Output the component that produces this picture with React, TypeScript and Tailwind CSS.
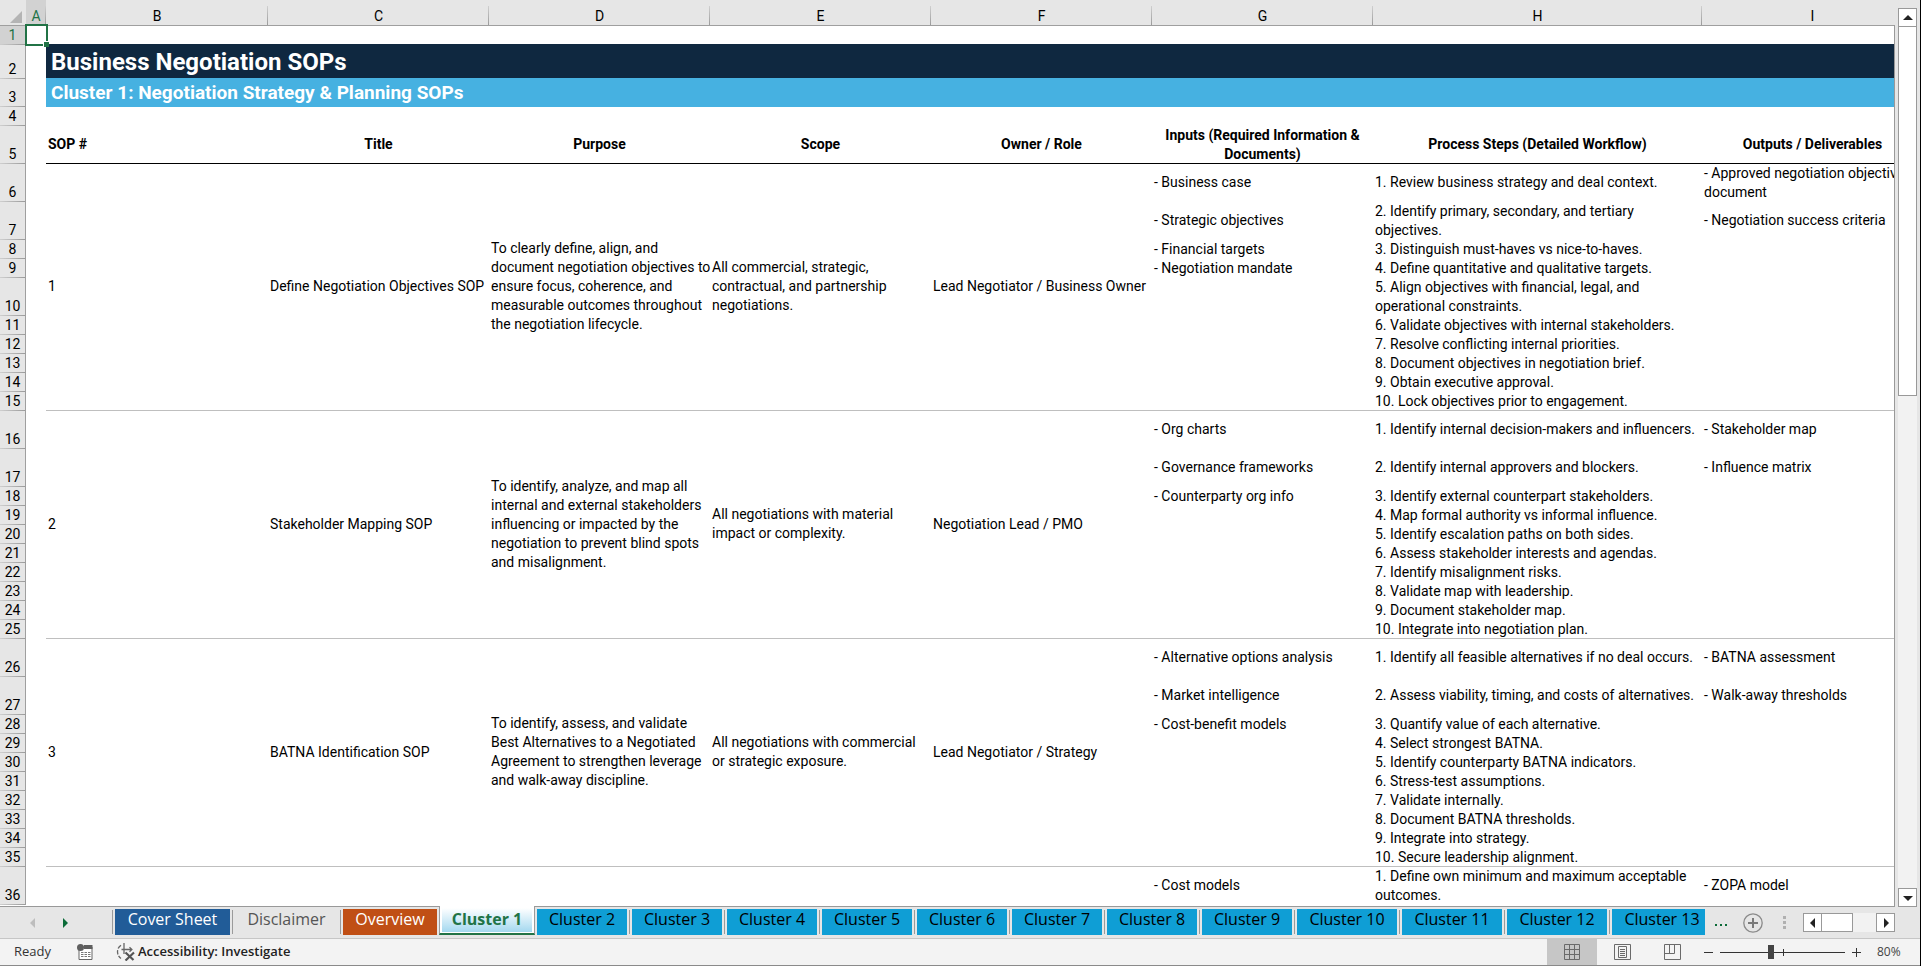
import type { ReactNode } from "react";

type Step = { h: 19 | 38; input?: string; step: string; output?: string };
type Group = { id: number; title: string; purpose: string; scope: string; owner: string; rows: Step[] };

const groups: Group[] = [
  {
    id: 1,
    title: "Define Negotiation Objectives SOP",
    purpose:
      "To clearly define, align, and\ndocument negotiation objectives to\nensure focus, coherence, and\nmeasurable outcomes throughout\nthe negotiation lifecycle.",
    scope: "All commercial, strategic,\ncontractual, and partnership\nnegotiations.",
    owner: "Lead Negotiator / Business Owner",
    rows: [
      { h: 38, input: "- Business case", step: "1. Review business strategy and deal context.", output: "- Approved negotiation objectives\ndocument" },
      { h: 38, input: "- Strategic objectives", step: "2. Identify primary, secondary, and tertiary\nobjectives.", output: "- Negotiation success criteria" },
      { h: 19, input: "- Financial targets", step: "3. Distinguish must-haves vs nice-to-haves." },
      { h: 19, input: "- Negotiation mandate", step: "4. Define quantitative and qualitative targets." },
      { h: 38, step: "5. Align objectives with financial, legal, and\noperational constraints." },
      { h: 19, step: "6. Validate objectives with internal stakeholders." },
      { h: 19, step: "7. Resolve conflicting internal priorities." },
      { h: 19, step: "8. Document objectives in negotiation brief." },
      { h: 19, step: "9. Obtain executive approval." },
      { h: 19, step: "10. Lock objectives prior to engagement." },
    ],
  },
  {
    id: 2,
    title: "Stakeholder Mapping SOP",
    purpose:
      "To identify, analyze, and map all\ninternal and external stakeholders\ninfluencing or impacted by the\nnegotiation to prevent blind spots\nand misalignment.",
    scope: "All negotiations with material\nimpact or complexity.",
    owner: "Negotiation Lead / PMO",
    rows: [
      { h: 38, input: "- Org charts", step: "1. Identify internal decision-makers and influencers.", output: "- Stakeholder map" },
      { h: 38, input: "- Governance frameworks", step: "2. Identify internal approvers and blockers.", output: "- Influence matrix" },
      { h: 19, input: "- Counterparty org info", step: "3. Identify external counterpart stakeholders." },
      { h: 19, step: "4. Map formal authority vs informal influence." },
      { h: 19, step: "5. Identify escalation paths on both sides." },
      { h: 19, step: "6. Assess stakeholder interests and agendas." },
      { h: 19, step: "7. Identify misalignment risks." },
      { h: 19, step: "8. Validate map with leadership." },
      { h: 19, step: "9. Document stakeholder map." },
      { h: 19, step: "10. Integrate into negotiation plan." },
    ],
  },
  {
    id: 3,
    title: "BATNA Identification SOP",
    purpose:
      "To identify, assess, and validate\nBest Alternatives to a Negotiated\nAgreement to strengthen leverage\nand walk-away discipline.",
    scope: "All negotiations with commercial\nor strategic exposure.",
    owner: "Lead Negotiator / Strategy",
    rows: [
      { h: 38, input: "- Alternative options analysis", step: "1. Identify all feasible alternatives if no deal occurs.", output: "- BATNA assessment" },
      { h: 38, input: "- Market intelligence", step: "2. Assess viability, timing, and costs of alternatives.", output: "- Walk-away thresholds" },
      { h: 19, input: "- Cost-benefit models", step: "3. Quantify value of each alternative." },
      { h: 19, step: "4. Select strongest BATNA." },
      { h: 19, step: "5. Identify counterparty BATNA indicators." },
      { h: 19, step: "6. Stress-test assumptions." },
      { h: 19, step: "7. Validate internally." },
      { h: 19, step: "8. Document BATNA thresholds." },
      { h: 19, step: "9. Integrate into strategy." },
      { h: 19, step: "10. Secure leadership alignment." },
    ],
  },
];

const headings = [
  "SOP #",
  "Title",
  "Purpose",
  "Scope",
  "Owner / Role",
  "Inputs (Required Information &\nDocuments)",
  "Process Steps (Detailed Workflow)",
  "Outputs / Deliverables",
];

const cell = "whitespace-pre p-0 pl-0.5 text-left align-middle font-normal";
const ruled = "shadow-[inset_0_-1px_0_#bfbfbf]";

/* Single-line text in a tall cell sits on the upper side of the centre line. */
const lift = (text: string | undefined, height: number) => (height > 19 && text && !text.includes("\n") ? "pb-px" : "");

function RowNumber({ n, active = false }: { n: number; active?: boolean }) {
  return (
    <th
      scope="row"
      className={
        "border-r border-[#9f9f9f] bg-[linear-gradient(to_right,#cfcfcf,#9b9b9b)] bg-[length:100%_1px] bg-bottom bg-no-repeat p-0 text-center align-bottom font-normal " +
        (active ? "bg-[#d2d2d2] text-[#217346]" : "bg-[#e6e6e6]")
      }
    >
      {n}
    </th>
  );
}

function Sheet() {
  let n = 5;
  return (
    <table className="w-[1923px] table-fixed border-separate border-spacing-0 font-[Roboto,sans-serif] text-sm leading-[19px] text-black">
      <colgroup>
        <col className="w-[26px]" />
        <col className="w-5" />
        <col className="w-[222px]" />
        <col className="w-[221px]" />
        <col className="w-[221px]" />
        <col className="w-[221px]" />
        <col className="w-[221px]" />
        <col className="w-[221px]" />
        <col className="w-[329px]" />
        <col className="w-[221px]" />
      </colgroup>
      <thead>
        <tr className="h-[26px]">
          <th className="border-b border-[#9f9f9f] bg-[#e6e6e6] p-0 pr-1 pb-0.5 align-bottom">
            <svg className="ml-auto block" width="12" height="12" viewBox="0 0 12 12" aria-hidden="true">
              <path d="M12 0v12H0z" fill="#b4b4b4" />
            </svg>
          </th>
          {["A", "B", "C", "D", "E", "F", "G", "H", "I"].map((c) => (
            <th
              key={c}
              scope="col"
              className={
                "border-b border-[#9f9f9f] bg-[linear-gradient(to_bottom,#cfcfcf,#9b9b9b)] bg-[length:1px_19px] bg-right-bottom bg-no-repeat p-0 text-center align-bottom leading-[17px] font-normal " +
                (c === "A" ? "bg-[#d2d2d2] text-[#217346]" : "bg-[#e6e6e6]")
              }
            >
              {c}
            </th>
          ))}
        </tr>
      </thead>
      <tbody>
        <tr className="h-[19px]">
          <RowNumber n={1} active />
          <td className="relative p-0">
            <span className="absolute -top-0.5 -right-0.5 -bottom-px -left-px z-10 border-2 border-[#217346]" />
            <span className="absolute -right-[3px] -bottom-0.5 z-10 size-[6px] border-t border-l border-white bg-[#217346]" />
          </td>
          <td colSpan={8} className="p-0 shadow-[inset_0_-1px_0_#0f2840]" />
        </tr>
        <tr className="h-[34px]">
          <RowNumber n={2} />
          <td className="p-0" />
          <td colSpan={8} className="bg-[#0f2840] p-0 pl-[5px] align-middle text-2xl leading-[34px] font-bold text-white shadow-[inset_0_-1px_0_#46b1e1]">
            Business Negotiation SOPs
          </td>
        </tr>
        <tr className="h-[28px]">
          <RowNumber n={3} />
          <td className="p-0" />
          <td colSpan={8} className="bg-[#46b1e1] p-0 pl-[5px] align-middle text-[19px] leading-[26px] font-bold text-white">
            Cluster 1: Negotiation Strategy &amp; Planning SOPs
          </td>
        </tr>
        <tr className="h-[19px]">
          <RowNumber n={4} />
          <td colSpan={9} className="p-0" />
        </tr>
        <tr className="h-[38px]">
          <RowNumber n={5} />
          <td className="p-0" />
          {headings.map((t, i) => (
            <th
              key={t}
              scope="col"
              className={
                "p-0 align-middle font-bold whitespace-pre shadow-[inset_0_-1px_0_#000] " +
                (i === 0 ? "pl-0.5 text-left " : "text-center ") +
                lift(t, 38)
              }
            >
              {t}
            </th>
          ))}
        </tr>
        {groups.map((g) =>
          g.rows.map((r, i) => {
            n += 1;
            const line = i === g.rows.length - 1 ? ruled : "";
            return (
              <tr key={n} className={r.h === 38 ? "h-[38px]" : "h-[19px]"}>
                <RowNumber n={n} />
                <td className="p-0" />
                {i === 0 &&
                  [String(g.id), g.title, g.purpose, g.scope, g.owner].map((t) => (
                    <td key={t} rowSpan={g.rows.length} className={`${cell} ${ruled} pb-0.5`}>
                      {t}
                    </td>
                  ))}
                <td className={`${cell} ${line} ${lift(r.input, r.h)}`}>{r.input}</td>
                <td className={`${cell} ${line} ${lift(r.step, r.h)}`}>{r.step}</td>
                <td className={`${cell} ${line} ${lift(r.output, r.h)}`}>{r.output}</td>
              </tr>
            );
          }),
        )}
        <tr className="h-[38px]">
          <RowNumber n={36} />
          <td colSpan={6} className="p-0" />
          <td className={`${cell} pb-px`}>- Cost models</td>
          <td className={cell}>{"1. Define own minimum and maximum acceptable\noutcomes."}</td>
          <td className={`${cell} pb-px`}>- ZOPA model</td>
        </tr>
      </tbody>
    </table>
  );
}

function Arrow({ d, className = "fill-[#222]" }: { d: "up" | "down" | "left" | "right"; className?: string }) {
  const paths = { up: "M0 7 5 2l5 5z", down: "M0 3l5 5 5-5z", left: "M7 0 2 5l5 5z", right: "M3 0l5 5-5 5z" };
  return (
    <svg width="10" height="10" viewBox="0 0 10 10" className={className} aria-hidden="true">
      <path d={paths[d]} />
    </svg>
  );
}

function ScrollButton({ label, children }: { label: string; children: ReactNode }) {
  return (
    <button type="button" aria-label={label} className="flex size-[19px] shrink-0 items-center justify-center border border-[#999] bg-white">
      {children}
    </button>
  );
}

function Divider() {
  return <span className="mx-0.5 mt-[3px] h-6 w-px shrink-0 bg-[#9b9b9b]" />;
}

const tabBase = "mt-0.5 h-[26px] shrink-0 pb-[5px] text-center leading-[21px] whitespace-nowrap ";

function SheetTabs() {
  return (
    <div className="flex h-[31px] shrink-0 bg-[#e6e6e6] font-['Open_Sans',sans-serif] text-base">
      <div className="flex w-[112px] shrink-0 items-center gap-[22px] pl-[28px]">
        <button type="button" aria-label="Previous sheets" className="flex">
          <Arrow d="left" className="fill-[#bdbdbd]" />
        </button>
        <button type="button" aria-label="Next sheets" className="flex">
          <Arrow d="right" className="fill-[#0b6b38]" />
        </button>
      </div>
      <nav aria-label="Sheets" className="flex min-w-0 flex-1 items-start overflow-x-clip">
        <span className="mt-[3px] mr-0.5 h-6 w-px shrink-0 bg-[#9b9b9b]" />
        <button type="button" className={tabBase + "w-[115px] bg-[#215c98] text-white"}>Cover Sheet</button>
        <Divider />
        <button type="button" className={tabBase + "w-[103px] text-[#555]"}>Disclaimer</button>
        <Divider />
        <button type="button" className={tabBase + "w-[94px] bg-[#c04f15] text-white"}>Overview</button>
        <button
          type="button"
          aria-current="page"
          className="relative mx-0.5 -mt-px h-[29px] w-24 shrink-0 border-x border-b-2 border-x-[#9b9b9b] border-b-[#217346] bg-white px-0.5 pt-0.5 pb-px font-bold whitespace-nowrap text-[#217346]"
        >
          <span className="block h-6 bg-linear-to-b from-white to-[#a3d8ef] leading-[23px]">Cluster 1</span>
        </button>
        {[2, 3, 4, 5, 6, 7, 8, 9, 10, 11, 12, 13].map((k) => (
          <span key={k} className="flex shrink-0 items-start">
            {k > 2 && <Divider />}
            <button type="button" className={tabBase + "bg-[#0f9ed5] text-black " + (k < 10 ? "w-[90px]" : "w-[100px]")}>
              Cluster {k}
            </button>
          </span>
        ))}
      </nav>
      <div className="flex shrink-0 items-center pr-[25px] pl-2.5">
        <button type="button" aria-label="More sheets" className="flex w-[13px]">
          <svg width="13" height="10" viewBox="0 0 13 10" fill="#0b6b38" aria-hidden="true">
            <path d="M0 6h2v2H0zM5 6h2v2H5zM10 6h2v2h-2z" />
          </svg>
        </button>
        <button type="button" aria-label="New sheet" className="ml-[15px] flex">
          <svg width="20" height="20" viewBox="0 0 20 20" fill="none" aria-hidden="true">
            <circle cx="10" cy="10" r="9.2" stroke="#8a8a8a" strokeWidth="1.3" />
            <path d="M5 10h10M10 5v10" stroke="#7a7a7a" strokeWidth="2" />
          </svg>
        </button>
        <svg className="ml-5" width="3" height="13" viewBox="0 0 3 13" fill="#b0b0b0" aria-hidden="true">
          <path d="M0 0h3v3H0zM0 5h3v3H0zM0 10h3v3H0z" />
        </svg>
        <div className="ml-[17px] flex w-[92px] bg-[#f2f2f2]">
          <ScrollButton label="Scroll left"><Arrow d="left" /></ScrollButton>
          <span className="w-[31px] border border-l-0 border-[#999] bg-white" />
          <span className="flex-1" />
          <ScrollButton label="Scroll right"><Arrow d="right" /></ScrollButton>
        </div>
      </div>
    </div>
  );
}

function StatusBar() {
  return (
    <footer className="flex h-7 shrink-0 items-center border-t border-b border-t-[#c6c6c6] border-b-[#8a8a8a] bg-[#f3f3f3] pl-3.5 font-['Open_Sans',sans-serif] text-[13px] text-[#333]">
      <span className="w-[63px]">Ready</span>
      <button type="button" aria-label="Record macro" className="flex w-[39px]">
        <svg width="16" height="16" viewBox="0 0 16 16" aria-hidden="true">
          <path d="M2 3h13v12.5H2z" fill="#fff" stroke="#666" />
          <path d="M7 1h8.500v4H7z" fill="#5f5f5f" />
          <circle cx="3.500" cy="3.500" r="3.500" fill="#5f5f5f" />
          <path d="M4 8.500h2.500M7.500 8.500H10M11 8.500h2.500M4 10.500h2.500M7.500 10.500H10M11 10.500h2.500M4 12.500h2.500M7.500 12.500H10M11 12.500h2.500" stroke="#777" />
        </svg>
      </button>
      <button type="button" className="flex items-center gap-[3px] font-semibold text-[#222]">
        <svg width="19" height="18" viewBox="0 0 19 18" fill="none" stroke="#666" strokeWidth="1.300" aria-hidden="true">
          <path d="M5 2.200A8 8 0 0 0 5 15.500" strokeDasharray="4.500 1.500" />
          <path d="M8 0v6.500M5.500 6.500h10.500M13.500 4.200l2.400 2.300-2.400 2.300M8 6.500v4.500" />
          <path d="M9.500 9.500l8 7.500M18 9.500 9.500 17.500" strokeWidth="2.200" stroke="#555" />
        </svg>
        Accessibility: Investigate
      </button>
      <div className="ml-auto flex h-full items-center">
        <button type="button" aria-label="Normal view" className="flex h-full w-[50px] items-center justify-center bg-[#c6c6c6]">
          <svg width="16" height="16" viewBox="0 0 16 16" fill="none" stroke="#6a6a6a" aria-hidden="true">
            <path d="M.5.5h15v15H.5zM5.500.5v15M10.500.5v15M.5 5.500h15M.5 10.500h15" />
          </svg>
        </button>
        <button type="button" aria-label="Page layout view" className="flex h-full w-[50px] items-center justify-center">
          <svg width="17" height="16" viewBox="0 0 17 16" fill="none" stroke="#6a6a6a" aria-hidden="true">
            <path d="M.5.5h16v15H.5zM4.500 2.500h8v11h-8zM6 5.500h5M6 7.500h5M6 9.500h5M6 11.500h5" />
          </svg>
        </button>
        <button type="button" aria-label="Page break preview" className="flex h-full w-[50px] items-center justify-center">
          <svg width="17" height="16" viewBox="0 0 17 16" fill="none" stroke="#6a6a6a" aria-hidden="true">
            <path d="M.5.5h16v15H.5zM.5 9.500h10V.5M5.500.5v9" />
          </svg>
        </button>
        <button type="button" aria-label="Zoom out" className="ml-[7px] flex">
          <svg width="9" height="9" viewBox="0 0 9 9" stroke="#333" aria-hidden="true"><path d="M0 4.500h9" /></svg>
        </button>
        <div className="relative mx-[7px] flex h-4 w-[125px] items-center">
          <input
            type="range"
            min={0}
            max={100}
            defaultValue={40}
            aria-label="Zoom level"
            className="h-4 w-full appearance-none bg-[linear-gradient(#333,#333)] bg-[length:100%_1px] bg-center bg-no-repeat [&::-webkit-slider-thumb]:h-3.5 [&::-webkit-slider-thumb]:w-1.5 [&::-webkit-slider-thumb]:appearance-none [&::-webkit-slider-thumb]:bg-[#444]"
          />
          <span className="pointer-events-none absolute top-[5px] left-1/2 h-[7px] w-px bg-[#333]" />
        </div>
        <button type="button" aria-label="Zoom in" className="flex">
          <svg width="9" height="9" viewBox="0 0 9 9" stroke="#333" aria-hidden="true"><path d="M0 4.500h9M4.500 0v9" /></svg>
        </button>
        <button type="button" className="ml-4 w-[43px] text-left text-xs text-[#444]">80%</button>
      </div>
    </footer>
  );
}

export default function App() {
  return (
    <div className="flex h-screen flex-col overflow-hidden border-r border-black bg-[#e6e6e6]">
      <div className="flex min-h-0 flex-1">
        <main className="min-w-0 flex-1 overflow-hidden border-b border-[#999] bg-white">
          <Sheet />
        </main>
        <aside className="flex w-[26px] shrink-0 flex-col">
          <div className="h-[25px] shrink-0" />
          <div className="-mt-[17px] flex min-h-0 flex-1">
            <div className="mt-[17px] w-[4px] border-l border-[#999]" />
            <div className="flex w-[19px] flex-col bg-[#f2f2f2]">
              <ScrollButton label="Scroll up"><Arrow d="up" /></ScrollButton>
              <div className="h-[41%] border border-t-0 border-[#999] bg-white" />
              <div className="flex-1" />
              <ScrollButton label="Scroll down"><Arrow d="down" /></ScrollButton>
            </div>
          </div>
        </aside>
      </div>
      <SheetTabs />
      <StatusBar />
    </div>
  );
}
